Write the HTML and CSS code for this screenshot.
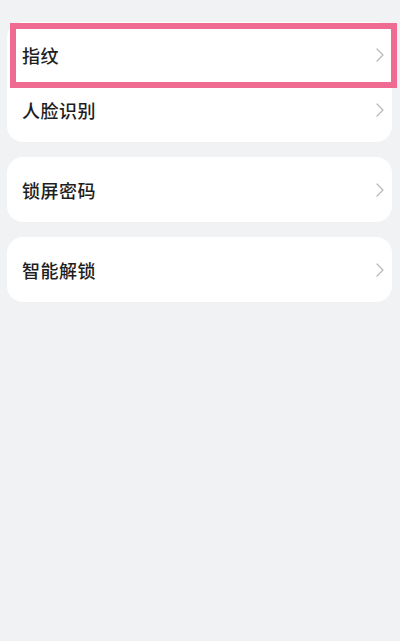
FILE: index.html
```html
<!DOCTYPE html>
<html lang="zh">
<head>
<meta charset="utf-8">
<link rel="stylesheet" href="styles.css">
</head>
<body>
<div class="page">
  <div class="card">
    <div class="row"><span class="label">指纹</span><svg class="chev" viewBox="0 0 8 14"><path d="M1 1l6 6-6 6"/></svg></div>
    <div class="row"><span class="label">人脸识别</span><svg class="chev" viewBox="0 0 8 14"><path d="M1 1l6 6-6 6"/></svg></div>
    <div class="highlight"></div>
  </div>
  <div class="card">
    <div class="row"><span class="label">锁屏密码</span><svg class="chev" viewBox="0 0 8 14"><path d="M1 1l6 6-6 6"/></svg></div>
  </div>
  <div class="card">
    <div class="row"><span class="label">智能解锁</span><svg class="chev" viewBox="0 0 8 14"><path d="M1 1l6 6-6 6"/></svg></div>
  </div>
</div>
</body>
</html>
```

FILE: styles.css
```css
html, body {
  margin: 0;
  padding: 0;
  background: #f1f2f4;
  height: 100%;
}
body {
  font-family: "Noto Sans CJK SC", "Noto Sans", sans-serif;
}
.page {
  padding: 22px 0 0 7px;
  display: flex;
  flex-direction: column;
  gap: 15px;
}
.card {
  position: relative;
  width: 385px;
  background: #ffffff;
  border-radius: 16px;
  padding: 5px 0;
  box-sizing: border-box;
}
.row {
  height: 55px;
  display: flex;
  align-items: center;
  justify-content: space-between;
  padding: 0 8px 0 15px;
}
.label {
  font-size: 18px;
  font-weight: 500;
  color: #1e1e1e;
  letter-spacing: 0.5px;
}
.chev {
  width: 8px;
  height: 14px;
  fill: none;
  stroke: #b9b9bc;
  stroke-width: 1.3;
  stroke-linecap: round;
  stroke-linejoin: round;
}
.highlight {
  position: absolute;
  left: 3px;
  right: -5px;
  top: 1px;
  height: 65px;
  border: 6px solid #f06b91;
  box-sizing: border-box;
}
```
